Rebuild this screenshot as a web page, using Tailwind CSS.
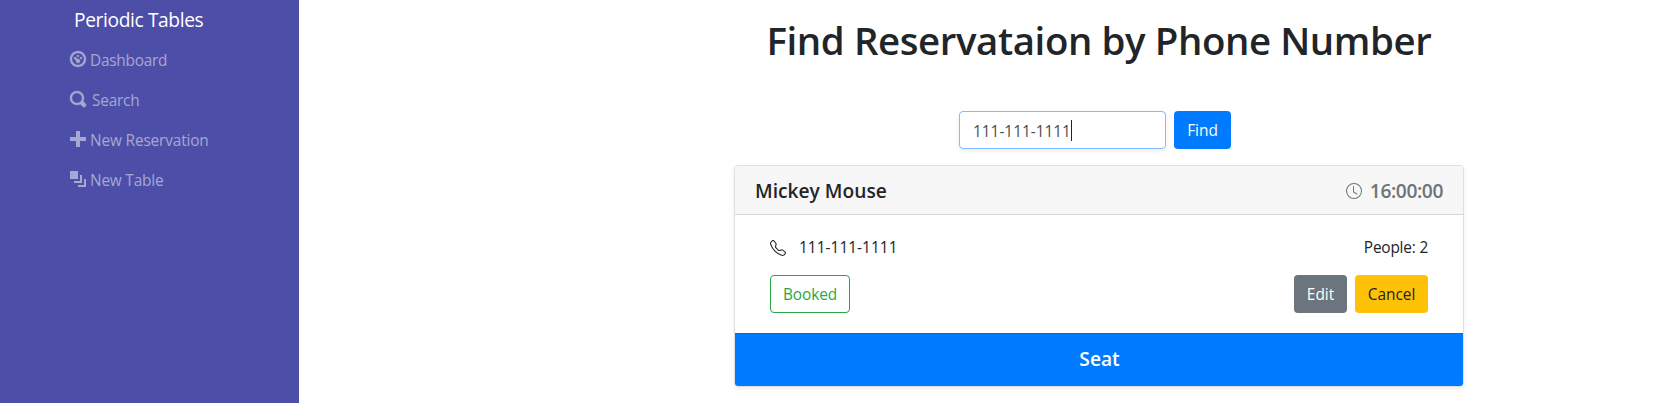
<!DOCTYPE html>
<html lang="en">
<head>
<meta charset="utf-8">
<title>Periodic Tables</title>
<script src="https://cdn.jsdelivr.net/npm/@tailwindcss/browser@4"></script>
</head>
<body class="flex h-[408px] items-start overflow-hidden bg-white font-['Open_Sans','Noto_Sans',sans-serif] text-[15.4px] leading-6 text-[#212529]">
<nav class="h-[403px] w-[299px] shrink-0 bg-[#4d4ea7] pl-[70px] text-white/50">
  <a class="flex h-10 items-center pl-1 text-[19.2px] tracking-[-0.38px] text-white"><span>Periodic Tables</span></a>
  <ul>
    <li class="flex h-10 items-center gap-1">
      <svg class="size-4 -translate-y-px overflow-visible" viewBox="0 0 8 8" fill="currentColor"><g class="opacity-50" fill="#fff" stroke="#fff" stroke-width=".18"><path d="M4 0c-2.2 0-4 1.8-4 4s1.8 4 4 4 4-1.8 4-4-1.8-4-4-4zm0 1c1.66 0 3 1.34 3 3s-1.34 3-3 3-3-1.34-3-3 1.34-3 3-3zm0 1c-.28 0-.5.22-.5.5s.22.5.5.5.5-.22.5-.5-.22-.5-.5-.5zm-1.66 1a.5.5 0 0 0-.19.84l.91.91c-.02.08-.06.16-.06.25 0 .55.45 1 1 1s1-.45 1-1-.45-1-1-1c-.09 0-.17.04-.25.06l-.91-.91a.5.5 0 0 0-.44-.16.5.5 0 0 0-.06 0zm3.16 0c-.28 0-.5.22-.5.5s.22.5.5.5.5-.22.5-.5-.22-.5-.5-.5z"/></g></svg>
      <span class="pt-0.5 tracking-[-0.25px]">Dashboard</span></li>
    <li class="flex h-10 items-center gap-1.5">
      <svg class="size-4 -translate-y-px overflow-visible" viewBox="0 0 8 8" fill="currentColor"><g class="opacity-50" fill="#fff" stroke="#fff" stroke-width=".18"><path d="M3.5 0c-1.93 0-3.5 1.57-3.5 3.5s1.57 3.5 3.5 3.5c.59 0 1.17-.14 1.66-.41a1 1 0 0 0 .13.13l1 1a1.02 1.02 0 1 0 1.44-1.44l-1-1a1 1 0 0 0-.16-.13c.27-.49.44-1.06.44-1.66 0-1.93-1.55-3.5-3.5-3.5zm0 1c1.39 0 2.5 1.11 2.5 2.5 0 .66-.24 1.27-.66 1.72-.01.01-.02.02-.03.03a1 1 0 0 0-.13.13c-.44.4-1.04.63-1.69.63-1.39 0-2.5-1.11-2.5-2.5s1.11-2.5 2.5-2.5z"/></g></svg>
      <span class="pt-0.5 tracking-[-0.2px]">Search</span></li>
    <li class="flex h-10 items-center gap-1">
      <svg class="size-4 -translate-y-px" viewBox="0 0 8 8" fill="currentColor"><path d="M3 0v3h-3v2h3v3h2v-3h3v-2h-3v-3h-2z"/></svg>
      <span class="pt-0.5 tracking-[-0.15px]">New Reservation</span></li>
    <li class="flex h-10 items-center gap-1">
      <svg class="size-4 -translate-y-px" viewBox="0 0 8 8" fill="currentColor"><path d="M0 0v4h4v-4h-4zm5 2v3h-3v1h4v-4h-1zm2 2v3h-3v1h4v-4h-1z"/></svg>
      <span class="pt-0.5 tracking-[-0.2px]">New Table</span></li>
  </ul>
</nav>
<main class="ml-[435px] w-[730px] shrink-0">
  <h1 class="mt-4 text-center text-[38.4px] font-semibold leading-12 tracking-[-0.4px] whitespace-nowrap">Find Reservataion by Phone Number</h1>
  <form class="mt-[47px] flex gap-2 pl-[225px]">
    <div class="flex h-[38px] w-[207px] items-center rounded border border-[#80bdff] pl-[13px] text-[#495057] shadow-[0_2px_4px_rgba(0,0,0,.075)]"><span class="pt-1">111-111-1111</span><i class="h-[21px] w-px bg-[#212529]"></i></div>
    <button type="button" class="h-[38px] w-[57px] rounded bg-[#007bff] pt-px text-white">Find</button>
  </form>
  <section class="mt-4 flex h-[222px] flex-col rounded border border-black/[.125] shadow-[0_2px_4px_rgba(0,0,0,.075)]">
    <header class="flex h-[49px] shrink-0 items-center justify-between rounded-t-[3px] border-b border-black/[.125] bg-[#f7f7f7] px-5 text-[19.2px] font-semibold">
      <h5 class="pt-0.5">Mickey Mouse</h5>
      <div class="flex items-center gap-2 text-[#6c757d]">
        <svg class="size-4 translate-y-px" viewBox="0 0 16 16" fill="currentColor"><path d="M8 3.5a.5.5 0 0 0-1 0V9a.5.5 0 0 0 .252.434l3.5 2a.5.5 0 0 0 .496-.868L8 8.71V3.5z"/><path d="M8 16A8 8 0 1 0 8 0a8 8 0 0 0 0 16zm7-8A7 7 0 1 1 1 8a7 7 0 0 1 14 0z"/></svg>
        <span class="pt-0.5 tracking-[-0.4px]">16:00:00</span></div>
    </header>
    <div class="flex flex-1 flex-col px-[35px] pt-5">
      <div class="flex h-6 items-center justify-between">
        <div class="flex items-center gap-3"><svg class="size-4 translate-y-px" viewBox="0 0 16 16" fill="currentColor"><path d="M3.654 1.328a.678.678 0 0 0-1.015-.063L1.605 2.3c-.483.484-.661 1.169-.45 1.77a17.568 17.568 0 0 0 4.168 6.608 17.569 17.569 0 0 0 6.608 4.168c.601.211 1.286.033 1.77-.45l1.034-1.034a.678.678 0 0 0-.063-1.015l-2.307-1.794a.678.678 0 0 0-.58-.122l-2.19.547a1.745 1.745 0 0 1-1.657-.459L5.482 8.062a1.745 1.745 0 0 1-.46-1.657l.548-2.19a.678.678 0 0 0-.122-.58L3.654 1.328zM1.884.511a1.745 1.745 0 0 1 2.612.163L6.29 2.98c.329.423.445.974.315 1.494l-.547 2.19a.678.678 0 0 0 .178.643l2.457 2.457a.678.678 0 0 0 .644.178l2.189-.547a1.745 1.745 0 0 1 1.494.315l2.306 1.794c.829.645.905 1.87.163 2.611l-1.034 1.034c-.74.74-1.846 1.065-2.877.702a18.634 18.634 0 0 1-7.01-4.42 18.634 18.634 0 0 1-4.42-7.009c-.362-1.03-.037-2.137.703-2.877L1.885.511z"/></svg><span class="pt-0.5 pl-px tracking-[0.05px]">111-111-1111</span></div>
        <span class="pt-0.5 tracking-[-0.2px]">People: 2</span>
      </div>
      <div class="mt-4 flex h-[38px] gap-2">
        <button type="button" class="mr-auto w-20 rounded border border-[#28a745] pt-px tracking-[-0.1px] text-[#28a745]">Booked</button>
        <button type="button" class="w-[53px] rounded bg-[#6c757d] pt-0.5 text-white">Edit</button>
        <button type="button" class="w-[73px] rounded bg-[#ffc107] pt-0.5">Cancel</button>
      </div>
    </div>
    <button type="button" class="h-[53px] shrink-0 rounded-b-[3px] border-t border-[#006cdf] bg-[#007bff] pb-0.5 pl-px text-[19.2px] font-semibold text-white">Seat</button>
  </section>
</main>
</body>
</html>
